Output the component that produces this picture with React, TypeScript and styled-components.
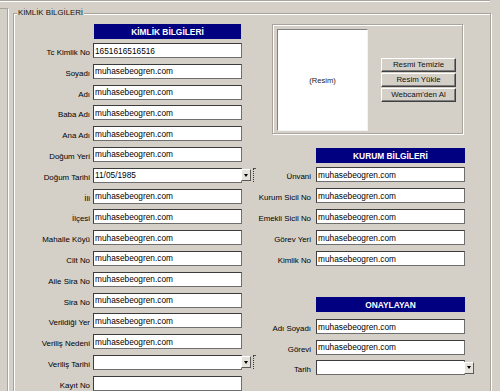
import styled, { createGlobalStyle } from "styled-components";

const SITE = "muhasebeogren.com";

type Row = { label: string; value: string; date?: boolean };

const personal: Row[] = [
  { label: "Tc Kimlik No", value: "1651616516516" },
  { label: "Soyadı", value: SITE },
  { label: "Adı", value: SITE },
  { label: "Baba Adı", value: SITE },
  { label: "Ana Adı", value: SITE },
  { label: "Doğum Yeri", value: SITE },
  { label: "Doğum Tarihi", value: "11/05/1985", date: true },
  { label: "İli", value: SITE },
  { label: "İlçesi", value: SITE },
  { label: "Mahalle Köyü", value: SITE },
  { label: "Cilt No", value: SITE },
  { label: "Aile Sira No", value: SITE },
  { label: "Sira No", value: SITE },
  { label: "Verildiği Yer", value: SITE },
  { label: "Veriliş Nedeni", value: SITE },
  { label: "Veriliş Tarihi", value: "", date: true },
  { label: "Kayıt No", value: "" },
];

const institution: Row[] = [
  { label: "Ünvani", value: SITE },
  { label: "Kurum Sicil No", value: SITE },
  { label: "Emekli Sicil No", value: SITE },
  { label: "Görev Yeri", value: SITE },
  { label: "Kimlik No", value: SITE },
];

const approver: Row[] = [
  { label: "Adı Soyadı", value: SITE },
  { label: "Görevi", value: SITE },
  { label: "Tarih", value: "", date: true },
];

const GlobalStyle = createGlobalStyle`
  html, body {
    margin: 0;
    padding: 0;
    background: #d4d0c8;
  }
  body {
    font-family: "Liberation Sans", Arial, sans-serif;
    overflow: hidden;
  }
  #root {
    width: 500px;
    height: 391px;
    overflow: hidden;
  }
`;

const Page = styled.div`
  display: flex;
  flex-direction: column;
  width: 500px;
  height: 391px;
  overflow: hidden;
  background: #d4d0c8;
`;

const TopStrip = styled.div`
  width: 489px;
  height: 2px;
  border-bottom: 1px solid #a8a49c;
  border-right: 1px solid #a8a49c;
  box-shadow: 0 1px 0 #fff;
`;

const Body = styled.div`
  display: flex;
  align-items: flex-start;
  margin-top: 7px;
`;

const LeftStub = styled.div`
  width: 7px;
  height: 400px;
  border-top: 1px solid #a8a49c;
  border-right: 1px solid #a8a49c;
  box-shadow: 1px 1px 0 #fff;
`;

const Group = styled.fieldset`
  margin: 0 0 0 5px;
  padding: 0;
  width: 476px;
  height: 420px;
  min-width: 0;
  border: 1px solid #a8a49c;
  box-shadow: inset 1px 1px 0 #fff, 1px 1px 0 #fff;
`;

const Legend = styled.legend`
  margin-left: 3px;
  padding: 0 1px;
  font-size: 7.8px;
  line-height: 10px;
  color: #111;
  background: #d4d0c8;
`;

const Columns = styled.div`
  display: flex;
  align-items: flex-start;
`;

const LeftColumn = styled.div`
  display: flex;
  flex-direction: column;
  width: 228px;
  margin-top: 6px;
`;

const RightColumn = styled.div`
  display: flex;
  flex-direction: column;
  margin-left: 15px;
  margin-top: 6px;
`;

const Header = styled.div<{ $width: number; $offset: number; $top?: number }>`
  display: flex;
  align-items: center;
  justify-content: center;
  width: ${(p) => p.$width}px;
  height: 15px;
  margin-left: ${(p) => p.$offset}px;
  margin-top: ${(p) => p.$top ?? 0}px;
  background: #000080;
  color: #fff;
  font-size: 8.4px;
  font-weight: bold;
  white-space: nowrap;
`;

const FormGrid = styled.div<{ $labelWidth: number; $colGap: number; $rowGap: number; $top: number }>`
  display: grid;
  grid-template-columns: ${(p) => p.$labelWidth}px 149px;
  grid-auto-rows: 15px;
  column-gap: ${(p) => p.$colGap}px;
  row-gap: ${(p) => p.$rowGap}px;
  margin-top: ${(p) => p.$top}px;
`;

const Label = styled.div`
  display: flex;
  justify-content: flex-end;
  align-items: flex-end;
  height: 15px;
  line-height: 11px;
  font-size: 7.9px;
  color: #000;
  white-space: nowrap;
`;

const Field = styled.input`
  box-sizing: border-box;
  width: 149px;
  height: 15px;
  margin: 0;
  padding: 0 1px;
  border: 1px solid;
  border-color: #3c3c3c #6e6e6e #6e6e6e #3c3c3c;
  background: #fff;
  color: #000;
  font-family: "Liberation Sans", Arial, sans-serif;
  font-size: 8.3px;
  outline: none;
  flex: none;
`;

const DateField = styled.div`
  display: flex;
  align-items: center;
  width: 149px;
  height: 15px;
`;

const DropButton = styled.div`
  flex: none;
  display: flex;
  align-items: center;
  justify-content: center;
  box-sizing: border-box;
  width: 10px;
  height: 12px;
  margin-left: -1px;
  background: #e6e3dc;
  border: 1px solid;
  border-color: #fff #5a5a5a #5a5a5a #fff;
`;

const Arrow = styled.span`
  width: 0;
  height: 0;
  border-left: 2.5px solid transparent;
  border-right: 2.5px solid transparent;
  border-top: 3px solid #000;
`;

const Grip = styled.span`
  flex: none;
  width: 2px;
  height: 13px;
  margin-left: 2px;
  border-left: 1px dotted #333;
  border-top: 1px solid #555;
`;

const PhotoFrame = styled.div`
  display: flex;
  align-items: center;
  box-sizing: border-box;
  width: 191px;
  height: 110px;
  margin-left: 15px;
  padding: 4px 0 2px 4px;
  border: 1px solid #a8a49c;
  box-shadow: inset 1px 1px 0 #fff, 1px 1px 0 #fff;
`;

const PhotoBox = styled.div`
  display: flex;
  align-items: center;
  justify-content: center;
  box-sizing: border-box;
  align-self: stretch;
  width: 91px;
  background: #fff;
  border: 1px solid;
  border-color: #808080 #f4f4f4 #f4f4f4 #808080;
  font-size: 7.6px;
  color: #222;
`;

const ButtonStack = styled.div`
  display: flex;
  flex-direction: column;
  gap: 1px;
  margin-left: 13px;
`;

const Button = styled.button`
  box-sizing: border-box;
  width: 75px;
  height: 14px;
  margin: 0;
  padding: 0;
  background: #d4d0c8;
  border: 1px solid;
  border-color: #fff #404040 #404040 #fff;
  box-shadow: inset -1px -1px 0 #808080;
  color: #111;
  font-family: "Liberation Sans", Arial, sans-serif;
  font-size: 7.9px;
  line-height: 12px;
`;

const Fields = ({ rows }: { rows: Row[] }) => (
  <>
    {rows.map((r) => (
      <Row key={r.label} row={r} />
    ))}
  </>
);

const Row = ({ row }: { row: Row }) => (
  <>
    <Label>{row.label}</Label>
    {row.date ? (
      <DateField>
        <Field readOnly defaultValue={row.value} />
        <DropButton>
          <Arrow />
        </DropButton>
        {row.label !== "Tarih" && <Grip />}
      </DateField>
    ) : (
      <Field readOnly defaultValue={row.value} />
    )}
  </>
);

export default function App() {
  return (
    <>
      <GlobalStyle />
      <Page>
        <TopStrip />
        <Body>
          <LeftStub />
          <Group>
            <Legend>KİMLİK BİLGİLERİ</Legend>
            <Columns>
              <LeftColumn>
                <Header $width={147} $offset={80}>
                  KİMLİK BİLGİLERİ
                </Header>
                <FormGrid $labelWidth={76} $colGap={3} $rowGap={5.8} $top={4}>
                  <Fields rows={personal} />
                </FormGrid>
              </LeftColumn>

              <RightColumn>
                <PhotoFrame>
                  <PhotoBox>(Resim)</PhotoBox>
                  <ButtonStack>
                    <Button>Resmi Temizle</Button>
                    <Button>Resim Yükle</Button>
                    <Button>Webcam'den Al</Button>
                  </ButtonStack>
                </PhotoFrame>

                <Header $width={149} $offset={59} $top={14}>
                  KURUM BİLGİLERİ
                </Header>
                <FormGrid $labelWidth={54} $colGap={5} $rowGap={6} $top={4}>
                  <Fields rows={institution} />
                </FormGrid>

                <Header $width={149} $offset={59} $top={31}>
                  ONAYLAYAN
                </Header>
                <FormGrid $labelWidth={54} $colGap={5} $rowGap={5.5} $top={7}>
                  <Fields rows={approver} />
                </FormGrid>
              </RightColumn>
            </Columns>
          </Group>
        </Body>
      </Page>
    </>
  );
}
